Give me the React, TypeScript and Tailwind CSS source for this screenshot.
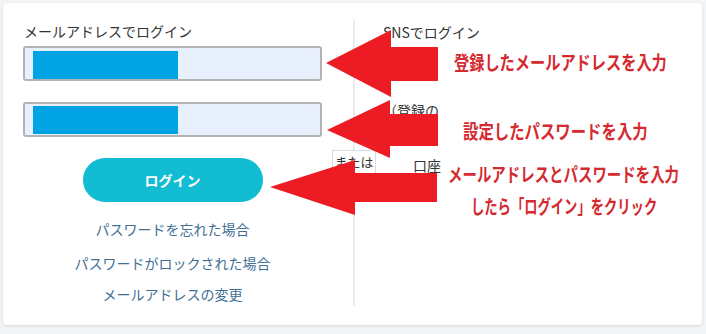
export default function App() {
  return (
    <div className="relative w-[706px] h-[334px] bg-[#f3f4f6] p-[3px] overflow-hidden font-['Noto_Sans_CJK_JP',sans-serif]">
      <div className="relative flex w-[699px] h-[322px] bg-white rounded-[4px] shadow-[0_1px_3px_rgba(0,0,0,0.12)]">
        {/* Left column */}
        <div className="w-[350px] pl-[20px] pt-[18px]">
          <div className="flex flex-col items-center w-[299px]">
            <div className="self-start pl-[1px] text-[14px] leading-[20px] text-[#333]">メールアドレスでログイン</div>
            <div className="self-stretch mt-[5px] h-[35px] border-2 border-[#b3b3b3] rounded-[3px] bg-[#e8f0fe] pl-[8px] pt-[3px]">
              <div className="w-[145px] h-[28px] bg-[#00a3e4]" />
            </div>
            <div className="self-stretch mt-[21px] h-[35px] border-2 border-[#b3b3b3] rounded-[3px] bg-[#e8f0fe] pl-[8px] pt-[2px]">
              <div className="w-[145px] h-[28px] bg-[#00a3e4]" />
            </div>
            <button className="mt-[21px] w-[180px] h-[44px] rounded-full bg-[#12bcd3] text-white text-[14px] font-bold leading-none">
              ログイン
            </button>
            <div className="mt-[17px] text-[14px] leading-[20px] text-[#3f6f94]">パスワードを忘れた場合</div>
            <div className="mt-[14px] text-[14px] leading-[20px] text-[#3f6f94]">パスワードがロックされた場合</div>
            <div className="mt-[11px] text-[14px] leading-[20px] text-[#3f6f94]">メールアドレスの変更</div>
          </div>
        </div>

        {/* Divider */}
        <div className="relative w-[2px] mt-[17px] h-[286px] bg-[#ececec]">
          <div className="absolute left-1/2 -translate-x-1/2 top-[130px] w-[44px] h-[26px] bg-white border border-[#dcdcdc] text-[13px] leading-[22px] text-center text-[#333]">
            または
          </div>
        </div>

        {/* Right column */}
        <div className="pl-[28px] pt-[19px] text-[#333]">
          <div className="text-[14px] leading-[20px]">SNSでログイン</div>
          <div className="mt-[58px] whitespace-nowrap text-[14px] leading-[20px]">（登録の</div>
          <div className="mt-[35px] ml-[30px] whitespace-nowrap text-[14px] leading-[20px]">口座</div>
        </div>
      </div>

      {/* Annotation overlay */}
      <div className="absolute inset-0 pointer-events-none">
        <svg className="absolute inset-0" width="706" height="334" viewBox="0 0 706 334">
          <polygon fill="#ed1c24" points="326,63 391,30 391,47 438,47 438,81 391,81 391,97" />
          <polygon fill="#ed1c24" points="327,130 390,100 390,114 438,114 438,146 390,146 390,158" />
          <polygon fill="#ed1c24" points="270,187 355,160 355,173 437,173 437,202 355,202 355,215" />
        </svg>
        <div className="absolute left-[454px] top-[52px] origin-left scale-x-[0.8] whitespace-nowrap text-[19px] leading-[20px] font-bold text-[#d42a30]">
          登録したメールアドレスを入力
        </div>
        <div className="absolute left-[463px] top-[121px] origin-left scale-x-[0.81] whitespace-nowrap text-[19px] leading-[20px] font-bold text-[#d42a30]">
          設定したパスワードを入力
        </div>
        <div className="absolute left-[448px] top-[164px] origin-left scale-x-[0.76] whitespace-nowrap text-[19px] leading-[20px] font-bold text-[#d42a30]">
          メールアドレスとパスワードを入力
        </div>
        <div className="absolute left-[471px] top-[196px] origin-left scale-x-[0.7] whitespace-nowrap text-[19px] leading-[20px] font-bold text-[#d42a30]">
          したら「ログイン」をクリック
        </div>
      </div>
    </div>
  );
}
